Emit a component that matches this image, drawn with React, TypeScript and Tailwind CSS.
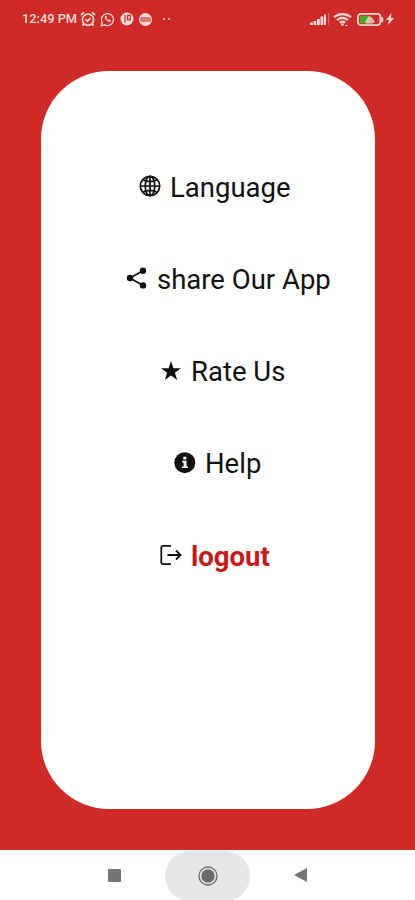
import type { ReactNode } from "react";

const GlobeIcon = () => (
  <svg viewBox="0 0 22 22" className="-mt-px size-[22px]" fill="none" stroke="#111" strokeWidth="1.7">
    <circle cx="11" cy="11" r="9.7" />
    <ellipse cx="11" cy="11" rx="4.8" ry="9.7" />
    <path d="M11 1.3v19.4M1.3 11h19.4M4 4.800c4 2.500 10 2.500 14 0M4 17.200c4-2.500 10-2.500 14 0" />
  </svg>
);

const ShareIcon = () => (
  <svg viewBox="0 0 22 22" className="-mt-px size-[22px]" fill="#111">
    <path d="M4 11 17 3.8M4 11l13 7.4" stroke="#111" strokeWidth="1.7" />
    <circle cx="4" cy="11" r="3.2" />
    <circle cx="17" cy="3.8" r="3.2" />
    <circle cx="17" cy="18.4" r="3.2" />
  </svg>
);

const StarIcon = () => (
  <svg viewBox="0 0 22 22" className="size-[22px]" fill="#111">
    <path d="m11 1 2.400 7.300h7.600l-6.100 4.400 2.300 7.300-6.200-4.500L4.800 20l2.300-7.300L1 8.300h7.600z" />
  </svg>
);

const InfoIcon = () => (
  <svg viewBox="0 0 22 22" className="size-[22px]">
    <circle cx="10.800" cy="10.700" r="10.500" fill="#111" />
    <path d="M9.300 4.800h3v2.700h-3zM8.200 8.800h4.300v5.600h1.500V16H8v-1.600h1.600v-4H8.200z" fill="#fff" />
  </svg>
);

const LogoutIcon = () => (
  <svg viewBox="0 0 22 22" className="size-[22px]" fill="none" stroke="#111" strokeWidth="1.8">
    <path d="M11 1.900H2.800A1.500 1.500 0 0 0 1.300 3.400v15.200a1.500 1.500 0 0 0 1.500 1.500H11M7.500 11h13M16 6.500l4.500 4.500-4.500 4.500" />
  </svg>
);

type MenuItemProps = {
  icon: ReactNode;
  label: string;
  className: string;
};

const MenuItem = ({ icon, label, className }: MenuItemProps) => (
  <li className={`flex h-[92px] items-center gap-[9px] ${className}`}>
    <span className="-mt-[3px] shrink-0">{icon}</span>
    <span className="whitespace-nowrap">{label}</span>
  </li>
);

const StatusBar = () => (
  <header className="flex h-[38px] items-center pl-[22px] text-[#ffdcd8]">
    <span className="w-[57px] text-[12.8px] font-medium whitespace-nowrap">12:49 PM</span>
    <svg viewBox="0 0 16 16" className="ml-px size-4" fill="none" stroke="currentColor" strokeWidth="1.7">
      <circle cx="8" cy="8.7" r="5.6" />
      <path d="m1 4 3-2.7M15 4l-3-2.7M5.5 8.2l2 2 3-3M3.8 13l-1.3 1.8M12.2 13l1.3 1.8" />
    </svg>
    <svg viewBox="0 0 15 15" className="ml-1 size-[15px]" fill="none" stroke="currentColor" strokeWidth="1.3">
      <path d="m1.2 13.8.9-3.5a6 6 0 1 1 2.4 2.5z" />
      <path d="M5.2 4.3c-1.3 1.3 2.5 6 5 5.4l.5-1.2-1.8-1-.8.8-1.9-2 .6-.8-.7-1.4z" fill="currentColor" strokeWidth=".5" />
    </svg>
    <svg viewBox="0 0 14 14" className="ml-[5px] size-3.5">
      <circle cx="7" cy="7" r="6.5" fill="currentColor" />
      <path d="M5 3v7.500M7.600 3.300v4.500h2.700V3.300z" fill="none" stroke="#cd2a28" strokeWidth="1.3" />
    </svg>
    <span className="ml-[5px] flex size-[13px] items-center justify-center rounded-full bg-current">
      <span className="h-[5px] w-[11px] rounded-xs bg-[#dc7670]" />
    </span>
    <span className="ml-[11px] flex gap-[3px]">
      <i className="size-0.5 rounded-full bg-current" />
      <i className="size-0.5 rounded-full bg-current" />
    </span>
    <svg viewBox="0 0 20 13" className="ml-[140px] h-[13px] w-5" fill="currentColor">
      <path d="M0 9.500h2.800V12H0zM3.500 8h2.800v4H3.500zM7 6h2.800v6H7zM10.500 3.500h2.800V12h-2.800z" />
      <path d="M14 1.500h2V12h-2z" />
      <path d="M18 0h1v12h-1z" opacity=".35" />
    </svg>
    <svg viewBox="0 0 19 15" className="ml-[3px] h-[15px] w-[19px]" fill="none" stroke="currentColor" strokeWidth="2.200">
      <path d="M1 5.200c5-4.200 12-4.200 17 0M4 8c3.500-2.800 7.500-2.800 11 0M6.800 10.700c1.800-1.300 3.600-1.300 5.400 0" />
      <path d="M8 12h3l-1.500 1.800zM12.500 13.500h2" fill="currentColor" strokeWidth="1" />
    </svg>
    <svg viewBox="0 0 27 13" className="ml-[5px] h-[13px] w-[27px]">
      <rect x=".9" y=".9" width="22.5" height="11.2" rx="3" fill="none" stroke="currentColor" strokeWidth="1.7" />
      <rect x="2.700" y="2.700" width="10.500" height="7.600" rx="1" fill="#49ad20" />
      <path d="M8 8.500 12 3l3 1.500L18 9l-3 1.500H9z" fill="#ffdcd8" opacity=".75" />
      <path d="M24.500 4q2 2.500 0 5" fill="none" stroke="currentColor" strokeWidth="1.600" />
    </svg>
    <svg viewBox="0 0 8 12" className="ml-[2px] h-3 w-2" fill="currentColor">
      <path d="M5.500 0 0 7h3l-1 5 6-7H5z" />
    </svg>
  </header>
);

const NavigationBar = () => (
  <nav className="flex h-[50px] items-center bg-white pl-[108px]">
    <span className="size-[13px] rounded-[1px] bg-[#757575]" />
    <span className="mt-[2px] ml-[44px] flex h-[50px] w-[85px] items-center justify-center rounded-full bg-[#e7e7e7]">
      <svg viewBox="0 0 20 20" className="-mt-px size-5">
        <circle cx="10" cy="10" r="9" fill="none" stroke="#686868" strokeWidth="1.3" />
        <circle cx="10" cy="10" r="6.7" fill="#6c6c6c" />
      </svg>
    </span>
    <svg viewBox="0 0 13 14" className="ml-[44px] h-3.5 w-[13px]" fill="#757575">
      <path d="M13 0v14L0 7z" />
    </svg>
  </nav>
);

export default function App() {
  return (
    <div className="flex h-[900px] w-[415px] flex-col overflow-hidden bg-[#cd2a28] font-['Roboto',sans-serif]">
      <StatusBar />
      <main className="flex h-[812px] flex-col px-[41px] pt-[33px]">
        <ul className="h-[738px] w-[334px] rounded-[68px] bg-white pt-[71px] text-[27.5px] text-[#111]">
          <MenuItem icon={<GlobeIcon />} label="Language" className="pl-[98px]" />
          <MenuItem icon={<ShareIcon />} label="share Our App" className="pl-[85px]" />
          <MenuItem icon={<StarIcon />} label="Rate Us" className="pl-[119px]" />
          <MenuItem icon={<InfoIcon />} label="Help" className="pl-[133px]" />
          <MenuItem
            icon={<LogoutIcon />}
            label="logout"
            className="pt-px pl-[119px] [&>span:last-child]:font-bold [&>span:last-child]:text-[#c81818]"
          />
        </ul>
      </main>
      <NavigationBar />
    </div>
  );
}
